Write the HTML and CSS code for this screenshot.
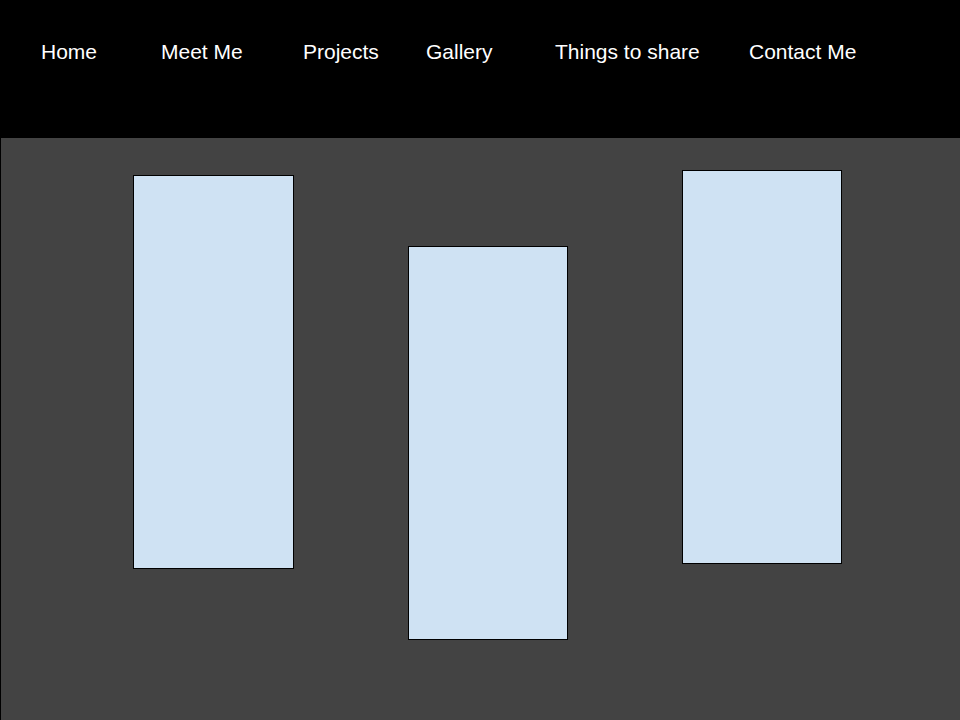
FILE: index.html
```html
<!DOCTYPE html>
<html lang="en">
<head>
<meta charset="utf-8">
<title>Portfolio</title>
<link rel="stylesheet" href="styles.css">
</head>
<body>
<header class="site-header">
  <nav class="nav">
    <a class="nav-link" href="#">Home</a>
    <a class="nav-link" href="#">Meet Me</a>
    <a class="nav-link" href="#">Projects</a>
    <a class="nav-link" href="#">Gallery</a>
    <a class="nav-link" href="#">Things to share</a>
    <a class="nav-link" href="#">Contact Me</a>
  </nav>
</header>
<main class="stage">
  <div class="panel panel-one"></div>
  <div class="panel panel-two"></div>
  <div class="panel panel-three"></div>
</main>
</body>
</html>
```

FILE: styles.css
```css
* { box-sizing: border-box; }

html, body {
  margin: 0;
  padding: 0;
  width: 960px;
  height: 720px;
  overflow: hidden;
  background: #434343;
  font-family: "Liberation Sans", Arial, sans-serif;
}

.site-header {
  height: 138px;
  background: #000000;
  padding: 40px 0 0 41px;
}

.nav {
  display: grid;
  grid-template-columns: 120px 142px 123px 129px 194px auto;
}

.nav-link {
  color: #ffffff;
  text-decoration: none;
  font-size: 21px;
  line-height: 24px;
  white-space: nowrap;
}

.stage {
  height: 582px;
  background: #434343;
  border-left: 1px solid #000000;
  display: flex;
  align-items: flex-start;
  gap: 114px;
  padding-left: 132px;
}

.panel {
  width: 160px;
  height: 394px;
  background: #cfe2f3;
  border: 1px solid #000000;
  flex: none;
}

.panel-one { width: 161px; margin-top: 37px; }
.panel-two { margin-top: 108px; }
.panel-three { margin-top: 32px; }
```
